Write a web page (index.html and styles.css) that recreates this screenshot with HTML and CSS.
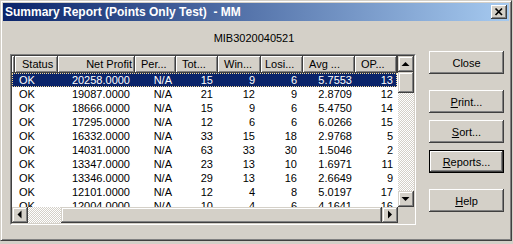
FILE: index.html
```html
<!DOCTYPE html>
<html>
<head>
	<meta charset="UTF-8" />
	<title>Summary Report</title>
	<link rel="stylesheet" href="styles.css">
</head>
<body>
<div class="window">
    <div class="titlebar">
        <span class="title">Summary Report (Points Only Test)  - MM</span>
        <span class="tb-close">
            <svg width="16" height="14" viewBox="0 0 16 14"><path d="M4.5 3.5 L11 10 M11 3.5 L4.5 10" stroke="#000" stroke-width="1.7" fill="none"/></svg>
        </span>
    </div>

    <div class="content">
        <div class="caption">MIB3020040521</div>

        <div class="list">
            <div class="list_in">
                <div class="view">
                    <div class="hdr">
                        <div class="c c0"></div>
                        <div class="c c1">Status</div>
                        <div class="c c2 r">Net Profit</div>
                        <div class="c c3">Per...</div>
                        <div class="c c4">Tot...</div>
                        <div class="c c5">Win...</div>
                        <div class="c c6">Losi...</div>
                        <div class="c c7">Avg ...</div>
                        <div class="c c8">OP...</div>
                        <div class="c cf"></div>
                    </div>
                    <div class="row sel"><div class="c c0"></div><div class="c c1">OK</div><div class="c c2">20258.0000</div><div class="c c3">N/A</div><div class="c c4">15</div><div class="c c5">9</div><div class="c c6">6</div><div class="c c7">5.7553</div><div class="c c8">13</div></div>
                    <div class="row"><div class="c c0"></div><div class="c c1">OK</div><div class="c c2">19087.0000</div><div class="c c3">N/A</div><div class="c c4">21</div><div class="c c5">12</div><div class="c c6">9</div><div class="c c7">2.8709</div><div class="c c8">12</div></div>
                    <div class="row"><div class="c c0"></div><div class="c c1">OK</div><div class="c c2">18666.0000</div><div class="c c3">N/A</div><div class="c c4">15</div><div class="c c5">9</div><div class="c c6">6</div><div class="c c7">5.4750</div><div class="c c8">14</div></div>
                    <div class="row"><div class="c c0"></div><div class="c c1">OK</div><div class="c c2">17295.0000</div><div class="c c3">N/A</div><div class="c c4">12</div><div class="c c5">6</div><div class="c c6">6</div><div class="c c7">6.0266</div><div class="c c8">15</div></div>
                    <div class="row"><div class="c c0"></div><div class="c c1">OK</div><div class="c c2">16332.0000</div><div class="c c3">N/A</div><div class="c c4">33</div><div class="c c5">15</div><div class="c c6">18</div><div class="c c7">2.9768</div><div class="c c8">5</div></div>
                    <div class="row"><div class="c c0"></div><div class="c c1">OK</div><div class="c c2">14031.0000</div><div class="c c3">N/A</div><div class="c c4">63</div><div class="c c5">33</div><div class="c c6">30</div><div class="c c7">1.5046</div><div class="c c8">2</div></div>
                    <div class="row"><div class="c c0"></div><div class="c c1">OK</div><div class="c c2">13347.0000</div><div class="c c3">N/A</div><div class="c c4">23</div><div class="c c5">13</div><div class="c c6">10</div><div class="c c7">1.6971</div><div class="c c8">11</div></div>
                    <div class="row"><div class="c c0"></div><div class="c c1">OK</div><div class="c c2">13346.0000</div><div class="c c3">N/A</div><div class="c c4">29</div><div class="c c5">13</div><div class="c c6">16</div><div class="c c7">2.6649</div><div class="c c8">9</div></div>
                    <div class="row"><div class="c c0"></div><div class="c c1">OK</div><div class="c c2">12101.0000</div><div class="c c3">N/A</div><div class="c c4">12</div><div class="c c5">4</div><div class="c c6">8</div><div class="c c7">5.0197</div><div class="c c8">17</div></div>
                    <div class="row"><div class="c c0"></div><div class="c c1">OK</div><div class="c c2">12004.0000</div><div class="c c3">N/A</div><div class="c c4">10</div><div class="c c5">4</div><div class="c c6">6</div><div class="c c7">4.1641</div><div class="c c8">16</div></div>
                </div>

                <div class="vscroll">
                    <div class="sbtn"><svg width="16" height="16" viewBox="0 0 16 16"><polygon points="3.5,10 11.5,10 7.5,6" fill="#000"/></svg></div>
                    <div class="thumb vthumb"></div>
                    <div class="track"></div>
                    <div class="sbtn"><svg width="16" height="16" viewBox="0 0 16 16"><polygon points="3.5,6 11.5,6 7.5,10" fill="#000"/></svg></div>
                </div>

                <div class="hscroll">
                    <div class="sbtn"><svg width="16" height="16" viewBox="0 0 16 16"><polygon points="9.5,3.5 9.5,11.5 5.5,7.5" fill="#000"/></svg></div>
                    <div class="track htrack"></div>
                    <div class="thumb hthumb"></div>
                    <div class="sbtn"><svg width="16" height="16" viewBox="0 0 16 16"><polygon points="6,3.5 6,11.5 10,7.5" fill="#000"/></svg></div>
                </div>

                <div class="corner"></div>
            </div>
        </div>

        <div class="buttons">
            <button class="btn">Close</button>
            <button class="btn gap"><u>P</u>rint...</button>
            <button class="btn"><u>S</u>ort...</button>
            <button class="btn def"><u>R</u>eports...</button>
            <button class="btn gap"><u>H</u>elp</button>
        </div>
    </div>
</div>
</body>
</html>
```

FILE: styles.css
```css
body{
    margin: 0;
    background: #d4d0c8;
    font-family: "Liberation Sans", Arial, sans-serif;
    font-size: 11px;
    color: #000;
}

.window{
    width: 512px;
    height: 241px;
    box-sizing: border-box;
    padding: 2px;
    border: 1px solid;
    border-color: #d4d0c8 #404040 #404040 #d4d0c8;
    box-shadow: inset 1px 1px #fff, inset -1px -1px #808080;
    background: #d4d0c8;
}

.titlebar{
    height: 18px;
    display: flex;
    align-items: center;
    padding: 0 2px 0 2px;
    background: linear-gradient(to right, #0a246a, #a6caf0);
}

.title{
    color: #fff;
    font-weight: bold;
    font-size: 12px;
    white-space: pre;
}

.tb-close{
    margin-left: auto;
    width: 16px;
    height: 14px;
    background: #d4d0c8;
    box-shadow: inset -1px -1px #404040, inset 1px 1px #fff, inset -2px -2px #808080;
}

.tb-close svg{
    display: block;
}

.content{
    display: grid;
    grid-template-columns: 406px 75px;
    grid-template-rows: 30px auto;
    column-gap: 13px;
    padding: 0 4px 0 7px;
}

.caption{
    grid-column: 1 / -1;
    text-align: center;
    line-height: 13px;
    padding: 11px 6px 0 0;
}

.list{
    margin-top: 3px;
    height: 171px;
    box-sizing: border-box;
    border: 1px solid;
    border-color: #808080 #fff #fff #808080;
}

.list_in{
    height: 100%;
    box-sizing: border-box;
    border: 1px solid;
    border-color: #404040 #d4d0c8 #d4d0c8 #404040;
    display: grid;
    grid-template-columns: 1fr 16px;
    grid-template-rows: 1fr 16px;
}

.view{
    background: #fff;
    overflow: hidden;
}

.hdr{
    display: flex;
    height: 17px;
    line-height: 17px;
    background: #d4d0c8;
}

.hdr .c{
    box-sizing: border-box;
    padding-left: 6px;
    box-shadow: inset -1px -1px #404040, inset 1px 1px #fff, inset -2px -2px #808080;
    white-space: nowrap;
    overflow: hidden;
}

.hdr .c1{ padding-left: 7px; }
.hdr .c6{ padding-left: 4px; }
.hdr .r{ text-align: right; padding: 0 3px 0 0; }
.hdr .cf{ flex: 1; padding: 0; }

.row{
    display: flex;
    height: 14px;
    line-height: 14px;
    width: 385px;
}

.row .c{
    box-sizing: border-box;
    text-align: right;
    padding-right: 5px;
    white-space: nowrap;
}

.row .c1{ text-align: left; padding-left: 4px; }
.row .c3{ padding-right: 4px; }
.row .c5, .row .c6{ padding-right: 6px; }
.row .c7{ padding-right: 3px; }
.row .c8{ padding-right: 4px; }

.row.sel{
    background: #0a246a;
    color: #fff;
    outline: 1px dotted #f5db95;
    outline-offset: -1px;
}

.c0{ width: 3px; padding: 0 !important; }
.c1{ width: 43px; }
.c2{ width: 77px; }
.c3{ width: 41px; }
.c4{ width: 42px; }
.c5{ width: 43px; }
.c6{ width: 42px; }
.c7{ width: 52px; }
.c8{ width: 42px; }

.vscroll{
    display: flex;
    flex-direction: column;
}

.hscroll{
    display: flex;
}

.sbtn{
    width: 16px;
    height: 16px;
    flex: none;
    background: #d4d0c8;
    box-shadow: inset -1px -1px #404040, inset 1px 1px #d4d0c8, inset -2px -2px #808080, inset 2px 2px #fff;
}

.sbtn svg{
    display: block;
}

.thumb{
    background: #d4d0c8;
    box-shadow: inset -1px -1px #404040, inset 1px 1px #d4d0c8, inset -2px -2px #808080, inset 2px 2px #fff;
}

.vthumb{ height: 21px; flex: none; }
.hthumb{ flex: 1; }

.track{
    flex: 1;
    background: repeating-conic-gradient(#fff 0 25%, #d4d0c8 0 50%) 0 0 / 2px 2px;
}

.htrack{
    flex: none;
    width: 33px;
}

.corner{
    background: #d4d0c8;
}

.buttons{
    display: flex;
    flex-direction: column;
}

.btn{
    width: 75px;
    height: 23px;
    margin: 7px 0 0;
    padding: 0;
    border: none;
    background: #d4d0c8;
    font-family: "Liberation Sans", Arial, sans-serif;
    font-size: 11px;
    color: #000;
    box-shadow: inset -1px -1px #404040, inset 1px 1px #fff, inset -2px -2px #808080;
}

.btn:first-child{
    margin-top: 0;
}

.btn.gap{
    margin-top: 16px;
}

.btn.def{
    border: 1px solid #000;
}
```
